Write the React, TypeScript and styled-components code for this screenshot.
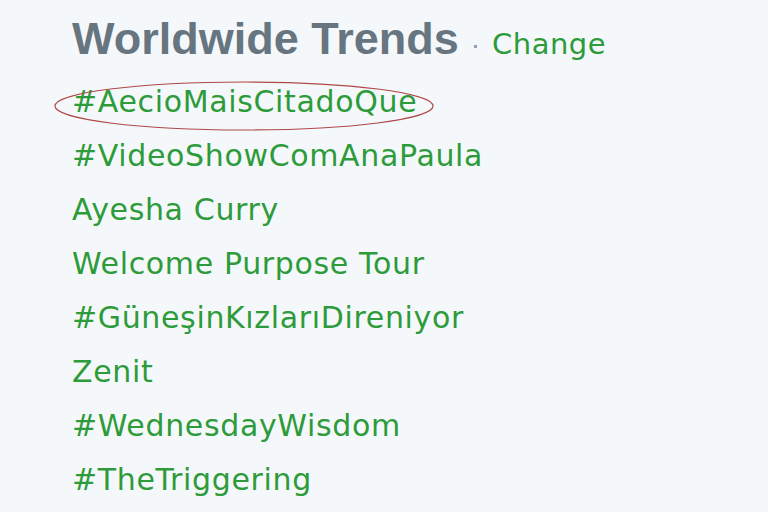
import React from 'react';
import styled, { createGlobalStyle } from 'styled-components';

const trends = [
  '#AecioMaisCitadoQue',
  '#VideoShowComAnaPaula',
  'Ayesha Curry',
  'Welcome Purpose Tour',
  '#GüneşinKızlarıDireniyor',
  'Zenit',
  '#WednesdayWisdom',
  '#TheTriggering'
];

const GlobalStyle = createGlobalStyle`
  html, body {
    margin: 0;
    padding: 0;
    background: #f5f8fa;
  }
`;

const Page = styled.div`
  width: 768px;
  height: 512px;
  overflow: hidden;
  background: #f5f8fa;
  padding: 13px 0 0 72px;
  box-sizing: border-box;
`;

const Header = styled.div`
  display: flex;
  align-items: baseline;
  gap: 12px;
  margin-bottom: 10px;
`;

const Title = styled.h3`
  margin: 0;
  font-family: 'Liberation Sans', Arial, sans-serif;
  font-weight: bold;
  font-size: 45px;
  color: #66757f;
  line-height: 52px;
`;

const Dot = styled.span`
  font-family: 'Liberation Sans', Arial, sans-serif;
  font-size: 28px;
  color: #8899a6;
`;

const ChangeLink = styled.a`
  font-family: 'DejaVu Sans', Verdana, sans-serif;
  font-size: 29px;
  letter-spacing: 0.5px;
  color: #2e9b3a;
  text-decoration: none;
`;

const List = styled.ul`
  list-style: none;
  margin: 0;
  padding: 0;
`;

const Item = styled.li`
  position: relative;
  height: 54px;
  line-height: 54px;
  font-family: 'DejaVu Sans', Verdana, sans-serif;
  font-size: 30px;
  letter-spacing: 0.65px;
  color: #2e9b3a;
  white-space: nowrap;
`;

const Ellipse = styled.svg`
  position: absolute;
  left: -19px;
  top: 5px;
  pointer-events: none;
`;

export default function App() {
  return (
    <>
      <GlobalStyle />
      <Page>
        <Header>
          <Title>Worldwide Trends</Title>
          <Dot>·</Dot>
          <ChangeLink>Change</ChangeLink>
        </Header>
        <List>
          {trends.map((t, i) => (
            <Item key={t}>
              {t}
              {i === 0 && (
                <Ellipse width="384" height="52" viewBox="0 0 384 52">
                  <ellipse cx="191" cy="26" rx="189" ry="24" fill="none" stroke="#b04848" strokeWidth="1.2" />
                </Ellipse>
              )}
            </Item>
          ))}
        </List>
      </Page>
    </>
  );
}
